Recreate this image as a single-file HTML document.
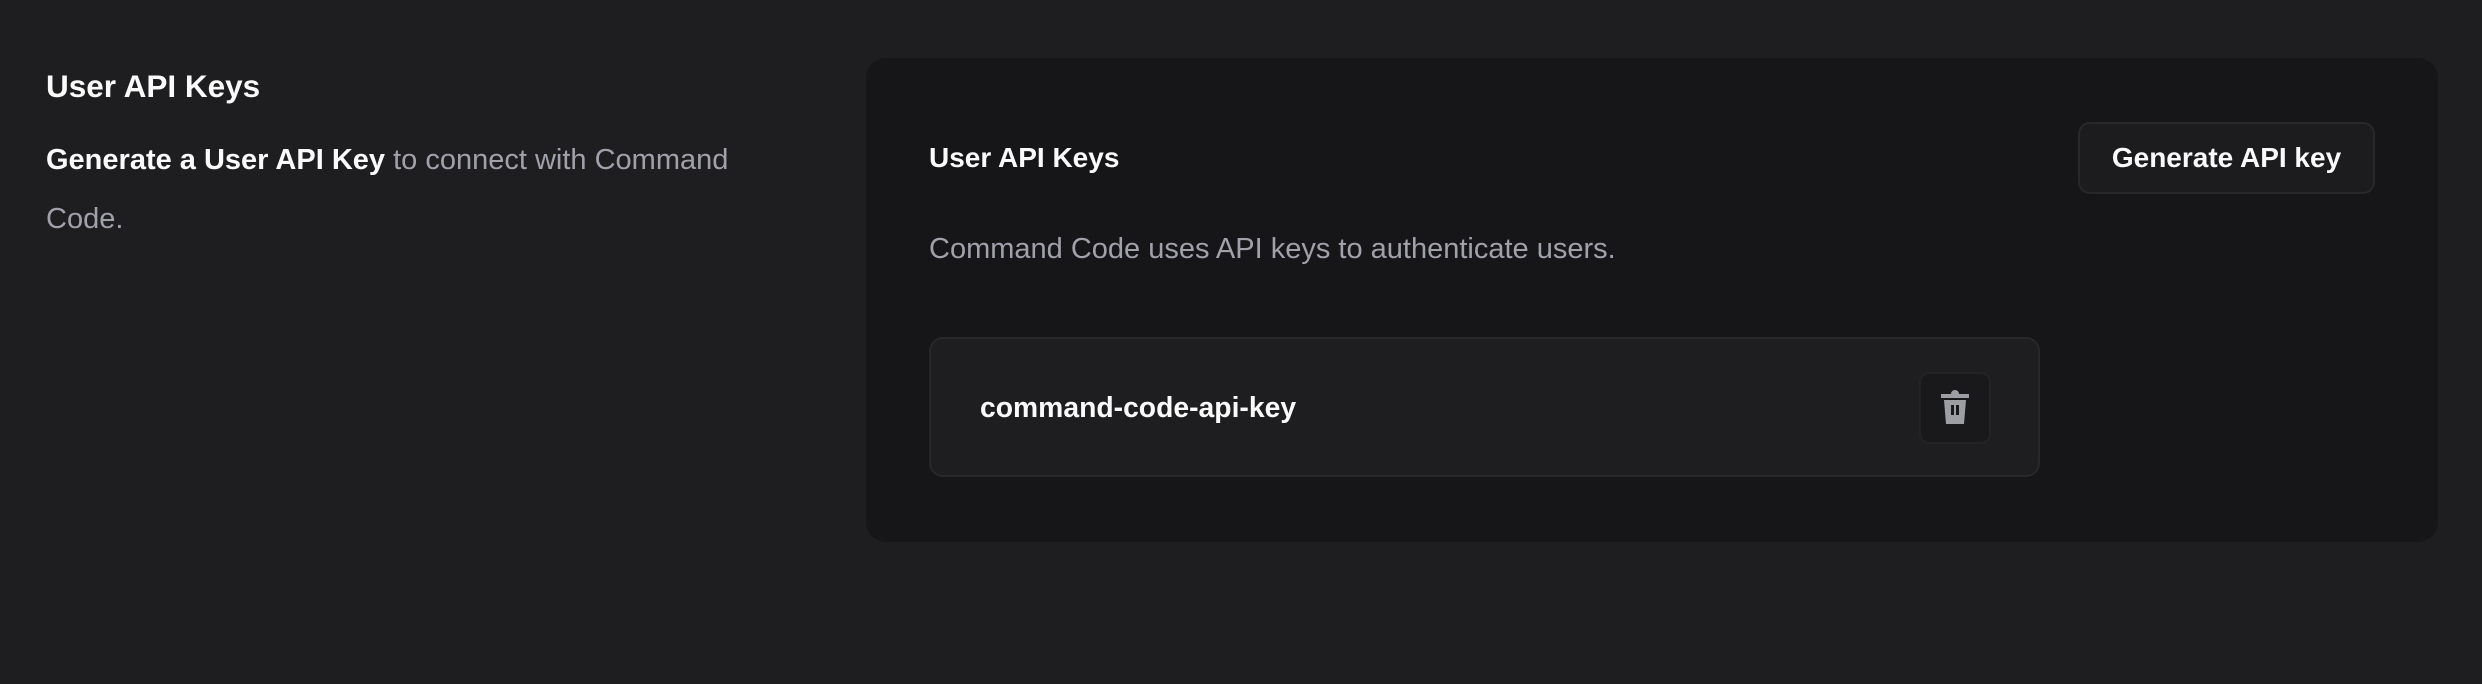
<!DOCTYPE html>
<html><head><meta charset="utf-8"><style>
*{margin:0;padding:0;box-sizing:border-box}
body{width:2482px;height:684px;background:#1e1e20;font-family:"Liberation Sans",sans-serif;color:#fafafa;position:relative;overflow:hidden}
.abs{position:absolute;white-space:nowrap}
.t1{left:46px;top:66px;font-size:31.5px;font-weight:700;line-height:40px}
.p{left:46px;top:131px;font-size:29px;line-height:59px;color:#a1a1aa;white-space:normal;width:760px}
.p b{color:#fafafa;font-weight:700}
.card{left:866px;top:58px;width:1572px;height:484px;background:#161618;border-radius:20px}
.h2{left:929px;top:140px;font-size:28px;font-weight:700;line-height:36px}
.btn{left:2078px;top:122px;width:297px;height:72px;border:2px solid #28282b;background:#1c1c1f;border-radius:12px;font-size:28px;font-weight:700;display:flex;align-items:center;justify-content:center}
.desc{left:929px;top:231px;font-size:29px;line-height:36px;color:#a1a1aa}
.row{left:929px;top:337px;width:1111px;height:140px;border:2px solid #28282b;background:#1e1e20;border-radius:14px}
.key{left:980px;top:389px;font-size:28.3px;font-weight:700;line-height:36px}
.tb{left:1919px;top:372px;width:72px;height:72px;border:2px solid #232326;background:#19191b;border-radius:10px;display:flex;align-items:center;justify-content:center}
</style></head><body>
<div class="abs t1">User API Keys</div>
<div class="abs p"><b>Generate a User API Key</b> to connect with Command Code.</div>
<div class="abs card"></div>
<div class="abs h2">User API Keys</div>
<div class="abs btn">Generate API key</div>
<div class="abs desc">Command Code uses API keys to authenticate users.</div>
<div class="abs row"></div>
<div class="abs key">command-code-api-key</div>
<div class="abs tb"><svg width="32" height="36" viewBox="0 0 32 36"><path d="M12 4a4 4 0 0 1 8 0h10v4H2V4z" fill="#9d9da4"/><path d="M5 10h22l-2 24H7z" fill="#9d9da4"/><rect x="12" y="15" width="3" height="10" fill="#19191b"/><rect x="17" y="15" width="3" height="10" fill="#19191b"/></svg></div>
</body></html>
